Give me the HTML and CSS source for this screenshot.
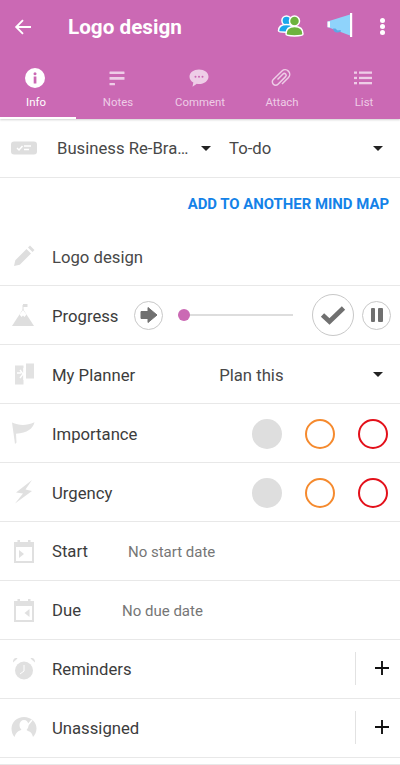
FILE: index.html
```html
<!DOCTYPE html>
<html lang="en">
<head>
<meta charset="utf-8">
<title>Logo design</title>
<link rel="stylesheet" href="styles.css">
</head>
<body>
<header class="header">
  <div class="toolbar">
    <svg class="back" viewBox="0 0 20 20" width="20" height="20"><path d="M18 10H3.500M10 3.200 3.200 10l6.800 6.800" fill="none" stroke="#fff" stroke-width="1.900"/></svg>
    <h1 class="title">Logo design</h1>
    <svg class="people" viewBox="0 0 28 24" width="28" height="24">
      <circle cx="9.500" cy="6.500" r="4.600" fill="#1aa7ec" stroke="#fff" stroke-width="1.500"/>
      <path d="M1.500 17c0-4.500 3.500-6.500 8-6.500s8 2 8 6.500c0 1.500-16 1.500-16 0z" fill="#1aa7ec" stroke="#fff" stroke-width="1.500"/>
      <circle cx="17.500" cy="7" r="5" fill="#6db33f" stroke="#fff" stroke-width="1.500"/>
      <path d="M9 20c0-5.500 3.500-7.500 8.500-7.500s8.500 2 8.500 7.500c0 2.500-17 2.500-17 0z" fill="#6db33f" stroke="#fff" stroke-width="1.500"/>
    </svg>
    <svg class="horn" viewBox="0 0 26 26" width="26" height="26">
      <path d="M0.500 8.500 23 1.500V22.500L0.500 14z" fill="#8fd3fb"/>
      <path d="M0.500 8.500h2.500v5.800h-2.500z" fill="#fff"/>
      <path d="M6 15.500c.5 3 2.500 4.500 5 4l3-1-.5-1.500-3 .5-2-2z" fill="#5aa9e6"/>
      <rect x="23" y="0" width="2.200" height="24" fill="#fff"/>
    </svg>
    <span class="dots"><i></i><i></i><i></i></span>
  </div>
  <nav class="tabs">
    <div class="tab active">
      <svg viewBox="0 0 20 20" width="20" height="20"><circle cx="10" cy="10" r="10" fill="#fff"/><rect x="8.700" y="8.500" width="2.700" height="7" fill="#cb69b4"/><circle cx="10" cy="5.800" r="1.500" fill="#cb69b4"/></svg>
      <span>Info</span>
    </div>
    <div class="tab">
      <svg viewBox="0 0 20 20" width="20" height="20" fill="#eecde7"><rect x="2.500" y="3.500" width="15" height="2.500" rx=".5"/><rect x="2.500" y="9" width="15" height="2.800" rx=".5"/><rect x="2.500" y="15" width="5.500" height="2.300" rx=".5"/></svg>
      <span>Notes</span>
    </div>
    <div class="tab">
      <svg viewBox="0 0 20 20" width="20" height="20"><path d="M10 1.500c5.300 0 9.500 3.100 9.500 7.200S15.300 16 10 16c-.8 0-1.500 0-2.200-.2L3.500 18.800l.8-4.200C2 13.200.5 11.100.5 8.700.5 4.600 4.700 1.500 10 1.500z" fill="#eecde7"/><circle cx="6.500" cy="8.700" r="1" fill="#cb69b4"/><circle cx="10" cy="8.700" r="1" fill="#cb69b4"/><circle cx="13.500" cy="8.700" r="1" fill="#cb69b4"/></svg>
      <span>Comment</span>
    </div>
    <div class="tab">
      <svg viewBox="0 0 20 20" width="20" height="20"><path d="M6.500 11.500 12 6a1.800 1.800 0 0 1 2.600 2.600L7 16.200a3.300 3.300 0 0 1-4.700-4.700L11 3a4.600 4.600 0 0 1 6.500 6.500L11 16" fill="none" stroke="#eecde7" stroke-width="1.500"/></svg>
      <span>Attach</span>
    </div>
    <div class="tab">
      <svg viewBox="0 0 20 20" width="20" height="20" fill="#eecde7"><rect x="1" y="3.500" width="3" height="2.300"/><rect x="6" y="3.500" width="13" height="2.300"/><rect x="1" y="8.800" width="3" height="2.300"/><rect x="6" y="8.800" width="13" height="2.300"/><rect x="1" y="14" width="3" height="2.300"/><rect x="6" y="14" width="13" height="2.300"/></svg>
      <span>List</span>
    </div>
  </nav>
</header>

<main class="content">
  <section class="row row-top">
    <svg class="icon" viewBox="0 0 26 14" width="26" height="14"><rect width="26" height="13" y="0.500" rx="3" fill="#dedede"/><path d="M6 7l2 2 3.500-4" fill="none" stroke="#fff" stroke-width="1.500"/><path d="M13 5h7M13 8.500h5" stroke="#fff" stroke-width="1.500"/></svg>
    <span class="select-one">Business Re-Bra…</span>
    <span class="caret caret-one"></span>
    <span class="select-two">To-do</span>
    <span class="caret caret-two"></span>
  </section>

  <section class="add-row"><a class="add-link">ADD TO ANOTHER MIND MAP</a></section>

  <section class="row row-name">
    <svg class="icon" viewBox="0 0 24 24" width="24" height="24"><path d="M2 22l1.300-5.800L14.500 5l4.500 4.500L7.800 20.700z M16 3.500 18 1.500l4.500 4.500-2 2z" fill="#dedede"/></svg>
    <span class="label name">Logo design</span>
  </section>

  <section class="row">
    <svg class="icon" viewBox="0 0 24 24" width="24" height="24"><path d="M11 2v6" stroke="#dedede"/><path d="M11 1h4.500v3H11z" fill="#dedede"/><path d="M11 6 22 23H0z" fill="#dedede"/><path d="M7.500 11.500 9.500 14l1.500-1.500 1.500 1.500 2-2.500L11 7z" fill="#fff"/></svg>
    <span class="label">Progress</span>
    <span class="round play"><svg viewBox="0 0 18 16" width="18" height="16"><path d="M1 4.500h7V0.500L17 8l-9 7.500v-4H1z" fill="#707070" stroke="#707070" stroke-linejoin="round"/></svg></span>
    <span class="slider"><i class="thumb"></i></span>
    <span class="round check"><svg viewBox="0 0 26 20" width="26" height="20"><path d="M2.500 10l7 6.500L23.500 3" fill="none" stroke="#707070" stroke-width="4.800"/></svg></span>
    <span class="round pause"><i></i><i></i></span>
  </section>

  <section class="row">
    <svg class="icon" viewBox="0 0 24 24" width="24" height="24"><rect x="3" y="3.500" width="8.500" height="19" fill="#e2e2e2"/><rect x="14" y="1.500" width="8" height="15" fill="#e2e2e2"/><path d="M5 11h4M8 8l3 4-3 4M12 6v12" fill="none" stroke="#fff" stroke-width="1.400"/></svg>
    <span class="label">My Planner</span>
    <span class="plan">Plan this</span>
    <span class="caret caret-plan"></span>
  </section>

  <section class="row">
    <svg class="icon" viewBox="0 0 24 24" width="24" height="24"><path d="M0 1.500c7 3 14 3.500 22.500-.3-1.500 6-7 11-18.500 11.500L4.500 21.500 3 23z" fill="#e2e2e2"/></svg>
    <span class="label">Importance</span>
    <span class="dots-set"><i class="dot grey"></i><i class="dot orange"></i><i class="dot red"></i></span>
  </section>

  <section class="row">
    <svg class="icon" viewBox="0 0 24 24" width="24" height="24"><path d="M20 0 4 12.500l7 1L3 23.500 20 11l-6.500-1.500z" fill="#e0e0e0"/></svg>
    <span class="label">Urgency</span>
    <span class="dots-set"><i class="dot grey"></i><i class="dot orange"></i><i class="dot red"></i></span>
  </section>

  <section class="row">
    <svg class="icon" viewBox="0 0 24 24" width="24" height="24"><path d="M3 4h18v19H3z" fill="none" stroke="#e0e0e0" stroke-width="2"/><path d="M2 3.500h20v4.500H2zM5.500 1h2.500v3H5.500zM16 1h2.500v3H16z" fill="#e0e0e0"/><path d="M7 11l5 4-5 4z" fill="#e0e0e0"/></svg>
    <span class="label">Start</span>
    <span class="note note-start">No start date</span>
  </section>

  <section class="row">
    <svg class="icon" viewBox="0 0 24 24" width="24" height="24"><path d="M3 4h18v19H3z" fill="none" stroke="#e0e0e0" stroke-width="2"/><path d="M2 3.500h20v4.500H2zM5.500 1h2.500v3H5.500zM16 1h2.500v3H16z" fill="#e0e0e0"/><path d="M17.500 11l-5 4 5 4z" fill="#e0e0e0"/></svg>
    <span class="label">Due</span>
    <span class="note note-due">No due date</span>
  </section>

  <section class="row">
    <svg class="icon" viewBox="0 0 24 24" width="24" height="24"><circle cx="12" cy="13.500" r="9" fill="#e0e0e0"/><path d="M1 5.500 5.500 1.500c-2-1.500-5 .5-4.500 4zM23 5.500 18.500 1.500c2-1.500 5 .5 4.500 4z" fill="#e0e0e0"/><path d="M12 8v6l-4 3" fill="none" stroke="#fff" stroke-width="1"/></svg>
    <span class="label">Reminders</span>
    <span class="plus-cell"><svg viewBox="0 0 16 16" width="16" height="16"><path d="M8 1v14M1 8h14" stroke="#111" stroke-width="1.900"/></svg></span>
  </section>

  <section class="row">
    <svg class="icon wide" viewBox="0 0 26 24" width="26" height="24"><path d="M13 1c7 0 12.500 5 12.500 11.500 0 3.500-1.500 6.500-3.500 8.500-1-3.500-2-5-5-6l-1.500-1c1.500-1.500 2-3 2-5 0-3-2-5-4.500-5S8.500 6 8.500 9c0 2 .8 3.500 2 5-3 .5-5.500 2.500-7 7C1.500 19 .5 15.500.5 12.500.5 6 6 1 13 1z" fill="#e0e0e0"/><path d="M6 22 21 4" stroke="#fff" stroke-width="1.500"/></svg>
    <span class="label">Unassigned</span>
    <span class="plus-cell"><svg viewBox="0 0 16 16" width="16" height="16"><path d="M8 1v14M1 8h14" stroke="#111" stroke-width="1.900"/></svg></span>
  </section>
  <div class="tail"></div>
</main>
</body>
</html>
```
FILE: styles.css
```css
* { box-sizing: border-box; }
html, body { margin: 0; padding: 0; }
body {
  width: 400px;
  height: 765px;
  overflow: hidden;
  background: #fff;
  font-family: Roboto, "Noto Sans", sans-serif;
  color: #333;
}
.header {
  height: 119px;
  background: #cb69b4;
  box-shadow: 0 1px 2px rgba(0,0,0,.18);
  position: relative;
}
.toolbar {
  height: 56px;
  display: flex;
  align-items: center;
}
.back { margin-left: 13px; margin-top: -3px; }
.title {
  margin: -3px 0 0 35px;
  font-size: 20.700px;
  font-weight: 700;
  color: #fff;
  flex: 1;
}
.people { margin-right: 22px; margin-top: -4px; }
.horn { margin-right: 27px; margin-top: -4px; }
.dots {
  display: flex;
  flex-direction: column;
  gap: 1px;
  margin-right: 15px;
  margin-top: -4px;
}
.dots i { width: 5px; height: 5px; border-radius: 50%; background: #fff; }
.tabs {
  display: flex;
  margin-left: -6px;
  height: 63px;
  padding-top: 12px;
}
.tab {
  width: 82px;
  flex: none;
  display: flex;
  flex-direction: column;
  align-items: center;
  font-size: 11.400px;
  color: #eecde7;
  position: relative;
}
.tab span { margin: 6px 0 0 2px; line-height: 16px; }
.tab.active { color: #fff; }
.tab.active::after {
  content: "";
  position: absolute;
  left: 6px;
  bottom: 0;
  width: 76px;
  height: 2px;
  background: #fff;
}
.content { display: block; }
.row {
  height: 58.900px;
  display: flex;
  align-items: center;
  border-bottom: 1.500px solid #e8e8e8;
  padding-left: 11px;
  font-size: 16.700px;
  position: relative;
}
.row-top { height: 59px; color: #484848; }
.icon { flex: none; width: 26px; margin-right: 15px; }
.row-top .icon { margin-right: 20px; margin-top: -1px; }
.select-one { width: 144px; white-space: nowrap; margin-top: 1px; }
.select-two { margin-left: 18px; flex: 1; margin-top: 1px; }
.caret {
  width: 0; height: 0;
  border-left: 5.500px solid transparent;
  border-right: 5.500px solid transparent;
  border-top: 5.500px solid #222;
}
.caret-one { margin-top: 1px; }
.caret-two { margin-right: 17px; margin-top: 1px; }
.caret-plan { margin-right: 17px; margin-top: 1px; }
.add-row {
  height: 49.500px;
  padding: 16px 11px 0 0;
  text-align: right;
  font-size: 14.900px;
  font-weight: 700;
  color: #1482e8;
  line-height: 20px;
}
.label { color: #3c3c3c; white-space: nowrap; margin-top: 2px; }
.name { color: #484848; }
.round {
  display: flex;
  align-items: center;
  justify-content: center;
  border-radius: 50%;
  border: 1px solid #c8c8c8;
  flex: none;
}
.play { width: 29px; height: 29px; margin-left: 16px; }
.slider {
  width: 115px;
  height: 2px;
  background: #ddd;
  margin-left: 15px;
  position: relative;
}
.thumb {
  position: absolute;
  left: 0;
  top: -5px;
  width: 12px;
  height: 12px;
  border-radius: 50%;
  background: #cb69b4;
}
.check { width: 42px; height: 42px; margin-left: 19px; }
.pause { width: 29px; height: 29px; margin-left: 8px; gap: 3px; }
.pause i { width: 4.500px; height: 14px; background: #707070; border-radius: 1px; }
.plan { margin-left: 84px; flex: 1; color: #484848; margin-top: 2px; }
.dots-set { margin-left: auto; display: flex; gap: 23px; margin-right: 12px; margin-top: 1px; }
.dot { width: 30px; height: 30px; border-radius: 50%; display: block; }
.dot.grey { background: #dedede; }
.dot.orange { border: 2px solid #f58a2e; }
.dot.red { border: 2px solid #e3101a; }
.note { color: #767676; font-size: 15px; margin-top: 2px; }
.note-start { margin-left: 40px; }
.note-due { margin-left: 41px; }
.plus-cell {
  position: absolute;
  right: 0;
  top: 12px;
  height: 33px;
  width: 45px;
  border-left: 1px solid #e2e2e2;
  display: flex;
  align-items: center;
  justify-content: center;
  padding-left: 8px;
}
.tail {
  height: 7px;
  border-bottom: 1px solid #e8e8e8;
}
```
